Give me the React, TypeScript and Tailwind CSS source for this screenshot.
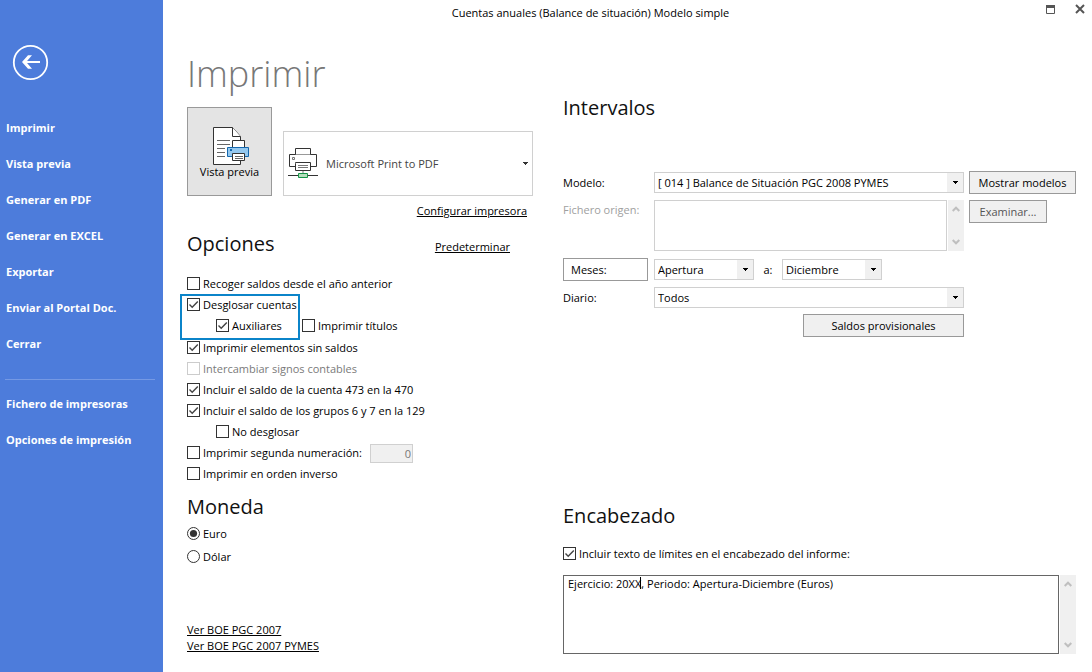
import { useState, type ReactNode } from "react";
import clsx from "clsx";

const mainMenu = [
  "Imprimir",
  "Vista previa",
  "Generar en PDF",
  "Generar en EXCEL",
  "Exportar",
  "Enviar al Portal Doc.",
  "Cerrar",
];

const setupMenu = ["Fichero de impresoras", "Opciones de impresión"];

type CheckProps = {
  label: string;
  defaultChecked?: boolean;
  disabled?: boolean;
  className?: string;
};

function Check({ label, defaultChecked, disabled, className }: CheckProps) {
  return (
    <label className={clsx("flex h-[21px] items-center gap-[3px] whitespace-nowrap", disabled && "text-[#7a7a7a]", className)}>
      <span className="relative block size-[13px] shrink-0">
        <input
          type="checkbox"
          defaultChecked={defaultChecked}
          disabled={disabled}
          className="peer block size-[13px] appearance-none border border-[#333] bg-white disabled:border-[#ccc]"
        />
        <svg viewBox="0 0 13 13" className="pointer-events-none absolute inset-0 hidden size-[13px] peer-checked:block">
          <path d="M2.5 6.5 5.2 9.2 10.8 3.4" fill="none" stroke="#444" strokeWidth="1.4" />
        </svg>
      </span>
      {label}
    </label>
  );
}

type RadioProps = {
  label: string;
  checked: boolean;
  onChange: () => void;
};

function Radio({ label, checked, onChange }: RadioProps) {
  return (
    <label className="flex h-[23px] items-center gap-[3px]">
      <span className="relative block size-[13px] shrink-0">
        <input
          type="radio"
          name="moneda"
          checked={checked}
          onChange={onChange}
          className="peer block size-[13px] appearance-none rounded-full border border-[#333] bg-white"
        />
        <svg viewBox="0 0 13 13" className="pointer-events-none absolute inset-0 hidden size-[13px] peer-checked:block">
          <circle cx="6.5" cy="6.5" r="3.6" fill="#333" />
        </svg>
      </span>
      {label}
    </label>
  );
}

type SelectProps = {
  id: string;
  label?: string;
  options: string[];
  className?: string;
};

function Select({ id, label, options, className }: SelectProps) {
  return (
    <div className={clsx("relative", className)}>
      <select
        id={id}
        aria-label={label}
        className="block h-[21px] w-full appearance-none border border-[#d0d0d0] bg-white pr-5 pl-[3px] leading-4 outline-none"
      >
        {options.map((option) => (
          <option key={option}>{option}</option>
        ))}
      </select>
      <span className="pointer-events-none absolute inset-y-px right-px flex w-4 items-center justify-center bg-[#f0f0f0]">
        <svg viewBox="0 0 5 3" className="h-[3px] w-[5px]" shapeRendering="crispEdges">
          <path d="M0 0h5v1H4v1H3v1H2V2H1V1H0z" fill="#000" />
        </svg>
      </span>
    </div>
  );
}

function ScrollTrack() {
  return (
    <div className="flex w-4 shrink-0 flex-col items-center justify-between bg-[#f0f0f0] py-[6px]">
      <svg viewBox="0 0 8 6" className="h-[6px] w-2">
        <path d="M0.7 5 4 1.7 7.3 5" fill="none" stroke="#bfbfbf" strokeWidth="2" />
      </svg>
      <svg viewBox="0 0 8 6" className="h-[6px] w-2">
        <path d="M0.7 1 4 4.3 7.3 1" fill="none" stroke="#bfbfbf" strokeWidth="2" />
      </svg>
    </div>
  );
}

function Button({ children, disabled, className }: { children: ReactNode; disabled?: boolean; className?: string }) {
  return (
    <button
      type="button"
      disabled={disabled}
      className={clsx("h-[23px] border border-[#999] bg-[#f0f0f0] whitespace-nowrap disabled:text-[#555]", className)}
    >
      {children}
    </button>
  );
}

function Heading({ children }: { children: ReactNode }) {
  return <h2 className="text-[20px] leading-7 text-[#111]">{children}</h2>;
}

function PreviewIcon() {
  return (
    <svg viewBox="0 0 37 39" className="-mb-[2px] ml-1 h-[39px] w-[37px]" strokeWidth="1">
      <path d="M.5.5H19.5L27.5 9.5V37.5H.5z" fill="#fff" stroke="#333" />
      <path d="M19.5.5V9.5H27.5" fill="#fff" stroke="#333" />
      <path d="M4 13.5H17M4 17.5H17M4 21.5H12M4 25.5H12M4 29.5H12" stroke="#666" />
      <path d="M19.5 20V13.5H31.5V20" fill="#fff" stroke="#333" />
      <path d="M14.5 20.5H35.5V29.5H14.5z" fill="#94c8ef" stroke="#1467ad" />
      <path d="M17 22H19V24H17z" fill="#1467ad" />
      <path d="M19.5 26.5H31.5V33.5H19.5z" fill="#fff" stroke="#333" />
      <path d="M22 29.5H30M22 31.5H30" stroke="#666" />
    </svg>
  );
}

function PrinterIcon() {
  return (
    <svg viewBox="0 0 30 31" className="h-[31px] w-[30px] shrink-0" strokeWidth="1">
      <path d="M1.5 6.5H28.5V18.5H1.5z" fill="#fff" stroke="#333" />
      <path d="M7.5 6.5V.5H22.5V6.5M7.5 15.5V22.5H22.5V14.5H7.5z" fill="#fff" stroke="#333" />
      <path d="M4.5 9.5H6.5V11.5H4.5z" fill="#fff" stroke="#777" />
      <path d="M10 17.5H20M10 19.5H20" stroke="#777" />
      <path d="M15 23V26" stroke="#bbb" strokeWidth="2" />
      <path d="M0 27.5H30" stroke="#333" />
      <path d="M10.5 25.5H19.5V29.5H10.5z" fill="#b5dfbd" stroke="#159447" />
    </svg>
  );
}

export default function App() {
  const [currency, setCurrency] = useState("euro");
  const [header, setHeader] = useState("Ejercicio: 20XX, Periodo: Apertura-Diciembre (Euros)");

  return (
    <div className="flex min-h-screen bg-white font-['Open_Sans',sans-serif] text-[11px] leading-4 text-black">
      <nav className="w-[163px] shrink-0 bg-[#4d7cdb] font-bold text-white">
        <button type="button" aria-label="Volver" className="mt-[44px] ml-3 block">
          <svg viewBox="0 0 37 37" className="size-[37px]" fill="none" stroke="#fff">
            <circle cx="18.5" cy="18.5" r="16.7" strokeWidth="1.8" />
            <path d="M28 18H12" strokeWidth="2" />
            <path d="M10 18 16 11.2H20L14.2 18 20 24.8H16z" fill="#fff" stroke="none" />
          </svg>
        </button>
        <ul className="mt-[29px]">
          {mainMenu.map((item) => (
            <li key={item}>
              <a href="#" className="flex h-9 items-center pl-[6px]">{item}</a>
            </li>
          ))}
        </ul>
        <hr className="mt-[17px] mr-2 mb-[6px] ml-[5px] border-[#7599e4]" />
        <ul>
          {setupMenu.map((item) => (
            <li key={item}>
              <a href="#" className="flex h-9 items-center pl-[6px]">{item}</a>
            </li>
          ))}
        </ul>
      </nav>

      <main className="min-w-0 flex-1">
        <header className="flex h-[26px] items-start">
          <p className="flex-1 pt-[5px] text-center">Cuentas anuales (Balance de situación) Modelo simple</p>
          <div className="flex w-[74px] justify-end gap-5 pt-1 pr-[7px]">
            <button type="button" aria-label="Maximizar">
              <svg viewBox="0 0 9 10" className="h-[10px] w-[9px]">
                <path d="M.5 1.5H8.5V9.5H.5z" fill="none" stroke="#555" />
                <path d="M0 1H9V4H0z" fill="#555" />
              </svg>
            </button>
            <button type="button" aria-label="Cerrar ventana">
              <svg viewBox="0 0 10 10" className="size-[10px]">
                <path d="M1 1 9 9M9 1 1 9" stroke="#555" strokeWidth="2" />
              </svg>
            </button>
          </div>
        </header>

        <div className="grid grid-cols-[346px_1fr] gap-[30px] pr-4 pl-6">
          <section>
            <h1 className="pt-6 text-[36px] leading-[48px] font-light text-[#777]">Imprimir</h1>
            <div className="mt-[9px] flex items-end justify-between">
              <button type="button" className="flex h-[89px] w-[85px] flex-col items-center justify-center border border-[#999] bg-[#e4e4e4] pt-1">
                <PreviewIcon />
                Vista previa
              </button>
              <button type="button" className="flex h-[65px] w-[250px] items-center gap-2 border border-[#d0d0d0] pr-1 pl-1 text-[#444]">
                <PrinterIcon />
                <span className="flex-1 text-left">Microsoft Print to PDF</span>
                <svg viewBox="0 0 5 3" className="h-[3px] w-[5px]" shapeRendering="crispEdges">
                  <path d="M0 0h5v1H4v1H3v1H2V2H1V1H0z" fill="#333" />
                </svg>
              </button>
            </div>
            <div className="mt-[7px] flex justify-end pr-[6px]">
              <a href="#" className="underline">Configurar impresora</a>
            </div>
            <div className="mt-[11px] flex items-center justify-between pr-[23px]">
              <Heading>Opciones</Heading>
              <a href="#" className="pt-[6px] underline">Predeterminar</a>
            </div>

            <div className="mt-[15px]">
              <Check label="Recoger saldos desde el año anterior" />
              <div className="relative mb-px">
                <Check label="Desglosar cuentas" defaultChecked />
                <div className="flex pl-[29px]">
                  <Check label="Auxiliares" defaultChecked className="w-[86px]" />
                  <Check label="Imprimir títulos" />
                </div>
                <div className="pointer-events-none absolute top-0 -left-[7px] h-[46px] w-[120px] border-2 border-[#0b84c9]" />
              </div>
              <Check label="Imprimir elementos sin saldos" defaultChecked />
              <Check label="Intercambiar signos contables" disabled />
              <Check label="Incluir el saldo de la cuenta 473 en la 470" defaultChecked />
              <Check label="Incluir el saldo de los grupos 6 y 7 en la 129" defaultChecked />
              <Check label="No desglosar" className="ml-[29px]" />
              <div className="flex h-[21px] items-start">
                <Check label="Imprimir segunda numeración:" className="w-[183px]" />
                <input
                  aria-label="Segunda numeración"
                  defaultValue="0"
                  disabled
                  className="mt-[2px] h-[19px] w-[43px] border border-[#d0d0d0] bg-[#f0f0f0] pr-px text-right text-[#777]"
                />
              </div>
              <Check label="Imprimir en orden inverso" />
            </div>

            <div className="mt-[9px]">
              <Heading>Moneda</Heading>
              <div className="mt-px">
                <Radio label="Euro" checked={currency === "euro"} onChange={() => setCurrency("euro")} />
                <Radio label="Dólar" checked={currency === "dolar"} onChange={() => setCurrency("dolar")} />
              </div>
            </div>

            <div className="mt-[54px] flex flex-col items-start">
              <a href="#" className="underline">Ver BOE PGC 2007</a>
              <a href="#" className="underline">Ver BOE PGC 2007 PYMES</a>
            </div>
          </section>

          <section>
            <div className="pt-[68px]">
              <Heading>Intervalos</Heading>
            </div>
            <div className="mt-[49px] grid grid-cols-[86px_1fr_107px] gap-x-[5px] gap-y-[6px]">
              <label htmlFor="modelo" className="self-center">Modelo:</label>
              <Select id="modelo" className="self-center" options={["[ 014 ] Balance de Situación PGC 2008 PYMES"]} />
              <Button>Mostrar modelos</Button>

              <label htmlFor="origen" className="pt-[2px] whitespace-nowrap text-[#a0a0a0]">Fichero origen:</label>
              <div className="flex h-[51px] gap-px">
                <textarea id="origen" disabled className="min-w-0 flex-1 resize-none border border-[#d0d0d0] bg-white px-1" />
                <ScrollTrack />
              </div>
              <Button disabled className="w-[78px]">Examinar...</Button>

              <button type="button" className="mt-px h-[23px] w-[85px] border border-[#999] bg-white pl-[7px] text-left">
                Meses:
              </button>
              <div className="mt-px flex items-center">
                <Select id="desde" label="Desde" className="w-[100px]" options={["Apertura", "Enero", "Febrero"]} />
                <label htmlFor="hasta" className="w-7 text-center">a:</label>
                <Select id="hasta" className="w-[100px]" options={["Diciembre", "Noviembre", "Octubre"]} />
              </div>
              <span />

              <label htmlFor="diario" className="self-center">Diario:</label>
              <Select id="diario" options={["Todos"]} />
              <span />

              <Button className="col-start-2 w-[161px] justify-self-end">Saldos provisionales</Button>
            </div>

            <div className="mt-[165px]">
              <Heading>Encabezado</Heading>
              <Check label="Incluir texto de límites en el encabezado del informe:" defaultChecked className="mt-[13px]" />
              <div className="relative mt-[11px] flex h-[79px] gap-px">
                <textarea
                  aria-label="Texto del encabezado"
                  value={header}
                  onChange={(event) => setHeader(event.target.value)}
                  className="min-w-0 flex-1 resize-none border border-[#666] bg-white px-1 outline-none"
                />
                <span className="pointer-events-none absolute top-[2px] left-[77px] h-3 w-px bg-black" />
                <ScrollTrack />
              </div>
            </div>
          </section>
        </div>
      </main>
    </div>
  );
}
